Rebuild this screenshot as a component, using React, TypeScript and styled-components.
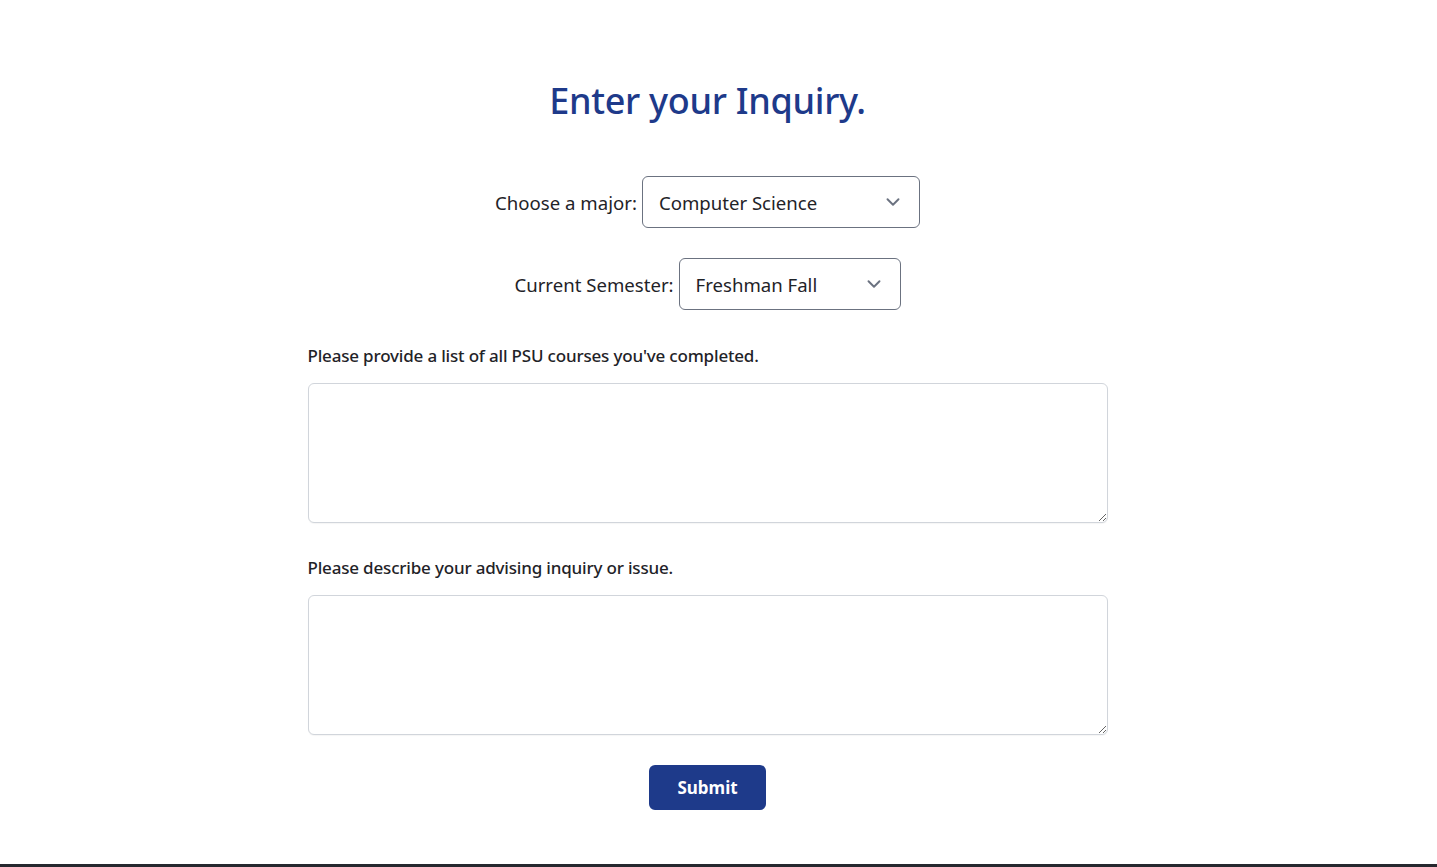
import React from "react";
import styled, { createGlobalStyle } from "styled-components";

const Global = createGlobalStyle`
  html, body { margin: 0; padding: 0; background: #ffffff; }
  body { font-family: "Noto Sans", "Open Sans", sans-serif; color: #1f2328; }
  * { box-sizing: border-box; }
`;

const Page = styled.div`
  min-height: 100vh;
  display: flex;
  flex-direction: column;
`;

const Main = styled.main`
  flex: 1;
  display: flex;
  flex-direction: column;
  align-items: center;
  padding: 77px 22px 0 0;
`;

const Footer = styled.footer`
  height: 3px;
  background: #26282e;
`;

const Title = styled.h1`
  margin: 0;
  font-size: 36px;
  line-height: 48px;
  font-weight: 500;
  color: #1e3a8a;
  letter-spacing: -0.3px;
`;

const SelectRow = styled.div<{ $top: number }>`
  display: flex;
  align-items: center;
  gap: 5px;
  margin-top: ${(p) => p.$top}px;
`;

const RowLabel = styled.label`
  font-size: 18.6px;
  color: #1f2328;
`;

const SelectBox = styled.div<{ $w: number }>`
  position: relative;
  width: ${(p) => p.$w}px;
  height: 52px;
  border: 1px solid #6b7280;
  border-radius: 6px;
  display: flex;
  align-items: center;
  justify-content: space-between;
  padding: 0 15px 0 16px;
  font-size: 18.6px;
  color: #1f2328;
  background: #fff;
`;

const Chevron = () => (
  <svg width="22" height="22" viewBox="0 0 24 24" fill="none" stroke="#6b7280" strokeWidth="2.1" strokeLinecap="round" strokeLinejoin="round">
    <path d="m6 9 6 6 6-6" />
  </svg>
);

const Field = styled.div<{ $top: number }>`
  width: 800px;
  display: flex;
  flex-direction: column;
  gap: 15px;
  margin-top: ${(p) => p.$top}px;
`;

const FieldLabel = styled.label`
  font-size: 17px;
  line-height: 24px;
  font-weight: 500;
  color: #1f2328;
  letter-spacing: -0.18px;
`;

const TextArea = styled.textarea`
  width: 800px;
  height: 140px;
  border: 1px solid #d1d5db;
  border-radius: 6px;
  padding: 8px 12px;
  font: inherit;
  resize: vertical;
  box-shadow: 0 1px 1px rgba(0,0,0,0.04);
`;

const SubmitButton = styled.button`
  margin-top: 30px;
  width: 117px;
  height: 45px;
  border: none;
  border-radius: 6px;
  background: #1e3a8a;
  color: #fff;
  font-family: inherit;
  font-size: 17px;
  font-weight: 700;
  cursor: pointer;
`;

export default function App() {
  return (
    <Page>
      <Global />
      <Main>
        <Title>Enter your Inquiry.</Title>
        <SelectRow $top={51}>
          <RowLabel>Choose a major:</RowLabel>
          <SelectBox $w={278}>
            <span>Computer Science</span>
            <Chevron />
          </SelectBox>
        </SelectRow>
        <SelectRow $top={30}>
          <RowLabel>Current Semester:</RowLabel>
          <SelectBox $w={222}>
            <span>Freshman Fall</span>
            <Chevron />
          </SelectBox>
        </SelectRow>
        <Field $top={34}>
          <FieldLabel>Please provide a list of all PSU courses you've completed.</FieldLabel>
          <TextArea />
        </Field>
        <Field $top={33}>
          <FieldLabel>Please describe your advising inquiry or issue.</FieldLabel>
          <TextArea />
        </Field>
        <SubmitButton>Submit</SubmitButton>
      </Main>
      <Footer />
    </Page>
  );
}
